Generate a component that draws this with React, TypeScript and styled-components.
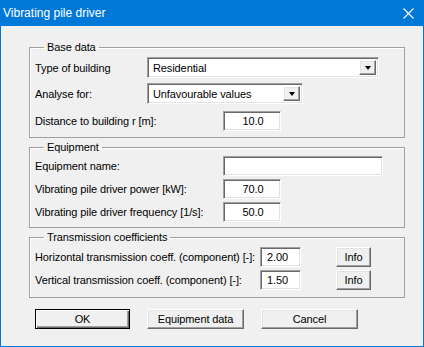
import React from 'react'
import styled, { createGlobalStyle, css } from 'styled-components'

const GlobalStyle = createGlobalStyle`
    html, body {
        margin: 0;
        padding: 0;
        background: #ffffff;
    }
    * {
        box-sizing: border-box;
    }
`

const sunken = css`
    background: #ffffff;
    border-style: solid;
    border-width: 1px;
    border-color: #a0a0a0 #ffffff #ffffff #a0a0a0;
    box-shadow: inset 1px 1px 0 #696969, inset -1px -1px 0 #e3e3e3;
`

const raised = css`
    background: #f0f0f0;
    border-style: solid;
    border-width: 1px;
    border-color: #ffffff #696969 #696969 #ffffff;
    box-shadow: inset -1px -1px 0 #a0a0a0, inset 1px 1px 0 #e3e3e3;
`

const Window = styled.div`
    width: 424px;
    height: 347px;
    display: flex;
    flex-direction: column;
    background: #f0f0f0;
    border: 1px solid #0078d7;
    border-top: none;
    font-family: 'Liberation Sans', Arial, sans-serif;
    font-size: 11px;
    letter-spacing: -0.1px;
    color: #000000;
`

const TitleBar = styled.div`
    height: 26px;
    flex: none;
    display: flex;
    align-items: center;
    justify-content: space-between;
    background: #0078d7;
    color: #ffffff;
    padding: 0 10px 0 3px;
    margin: 0 -1px;
    letter-spacing: 0;
`

const Title = styled.span`
    font-size: 12px;
    line-height: 14px;
`

const Body = styled.div`
    display: flex;
    flex-direction: column;
    padding: 15px 18px 0 28px;
`

const Group = styled.fieldset<{ $gap: number; $pad: string; $mt?: number }>`
    margin: ${(p) => p.$mt ?? 0}px 0 0 0;
    padding: ${(p) => p.$pad};
    min-width: 0;
    border: 1px solid #a0a0a0;
    box-shadow: inset 1px 1px 0 #ffffff;
    display: flex;
    flex-direction: column;
    gap: ${(p) => p.$gap}px;
`

const Legend = styled.legend`
    margin-left: 9px;
    padding: 0 3px;
    line-height: 13px;
`

const Row = styled.div<{ $h: number }>`
    display: flex;
    align-items: center;
    height: ${(p) => p.$h}px;
`

const Label = styled.span<{ $w: number }>`
    width: ${(p) => p.$w}px;
    flex: none;
    white-space: nowrap;
`

const TextField = styled.div<{ $w: number; $align?: string }>`
    ${sunken};
    width: ${(p) => p.$w}px;
    height: 100%;
    display: flex;
    align-items: center;
    justify-content: ${(p) => p.$align ?? 'center'};
    padding: 0 4px 0 6px;
`

const SelectBox = styled.div<{ $w: number }>`
    ${sunken};
    width: ${(p) => p.$w}px;
    height: 100%;
    display: flex;
    align-items: center;
    justify-content: space-between;
    padding: 2px 2px 2px 5px;
`

const DropButton = styled.div`
    ${raised};
    width: 17px;
    height: 100%;
    display: flex;
    align-items: center;
    justify-content: center;
`

const Arrow = styled.span`
    width: 0;
    height: 0;
    border-left: 3.5px solid transparent;
    border-right: 3.5px solid transparent;
    border-top: 4px solid #000000;
`

const Button = styled.div<{ $w: number; $default?: boolean }>`
    ${raised};
    width: ${(p) => p.$w}px;
    height: 20px;
    display: flex;
    align-items: center;
    justify-content: center;
    flex: none;
    ${(p) =>
        p.$default &&
        css`
            border: 1px solid #000000;
            box-shadow: inset 1px 1px 0 #ffffff, inset -1px -1px 0 #696969,
                inset -2px -2px 0 #a0a0a0;
        `}
`

const InfoButton = styled(Button)`
    margin-left: 35px;
`

const ButtonBar = styled.div`
    display: flex;
    gap: 17px;
    margin-top: 11px;
    padding-left: 6px;
`

const Select: React.FC<{ value: string; width: number }> = ({ value, width }) => (
    <SelectBox $w={width}>
        <span>{value}</span>
        <DropButton>
            <Arrow />
        </DropButton>
    </SelectBox>
)

export default function App() {
    return (
        <>
            <GlobalStyle />
            <Window>
                <TitleBar>
                    <Title>Vibrating pile driver</Title>
                    <svg width="11" height="11" viewBox="0 0 11 11">
                        <path d="M0.5 0.5 L10.5 10.5 M10.5 0.5 L0.5 10.5" stroke="#ffffff" strokeWidth="1.1" />
                    </svg>
                </TitleBar>
                <Body>
                    <Group $gap={5} $pad="3px 5px 6px 5px">
                        <Legend>Base data</Legend>
                        <Row $h={21}>
                            <Label $w={112}>Type of building</Label>
                            <Select value="Residential" width={232} />
                        </Row>
                        <Row $h={21}>
                            <Label $w={112}>Analyse for:</Label>
                            <Select value="Unfavourable values" width={156} />
                        </Row>
                        <Row $h={20} style={{ marginTop: 2 }}>
                            <Label $w={188}>Distance to building r [m]:</Label>
                            <TextField $w={58}>10.0</TextField>
                        </Row>
                    </Group>
                    <Group $gap={3} $pad="2px 5px 5px 5px" $mt={3}>
                        <Legend>Equipment</Legend>
                        <Row $h={20}>
                            <Label $w={188}>Equipment name:</Label>
                            <TextField $w={160} />
                        </Row>
                        <Row $h={20}>
                            <Label $w={188}>Vibrating pile driver power [kW]:</Label>
                            <TextField $w={58}>70.0</TextField>
                        </Row>
                        <Row $h={20}>
                            <Label $w={188}>Vibrating pile driver frequency [1/s]:</Label>
                            <TextField $w={58}>50.0</TextField>
                        </Row>
                    </Group>
                    <Group $gap={3} $pad="3px 5px 7px 5px" $mt={3}>
                        <Legend>Transmission coefficients</Legend>
                        <Row $h={20}>
                            <Label $w={225}>Horizontal transmission coeff. (component) [-]:</Label>
                            <TextField $w={41} $align="flex-start">2.00</TextField>
                            <InfoButton $w={35}>Info</InfoButton>
                        </Row>
                        <Row $h={20}>
                            <Label $w={225}>Vertical transmission coeff. (component) [-]:</Label>
                            <TextField $w={41} $align="flex-start">1.50</TextField>
                            <InfoButton $w={35}>Info</InfoButton>
                        </Row>
                    </Group>
                    <ButtonBar>
                        <Button $w={95} $default>
                            OK
                        </Button>
                        <Button $w={97}>Equipment data</Button>
                        <Button $w={97}>Cancel</Button>
                    </ButtonBar>
                </Body>
            </Window>
        </>
    )
}
